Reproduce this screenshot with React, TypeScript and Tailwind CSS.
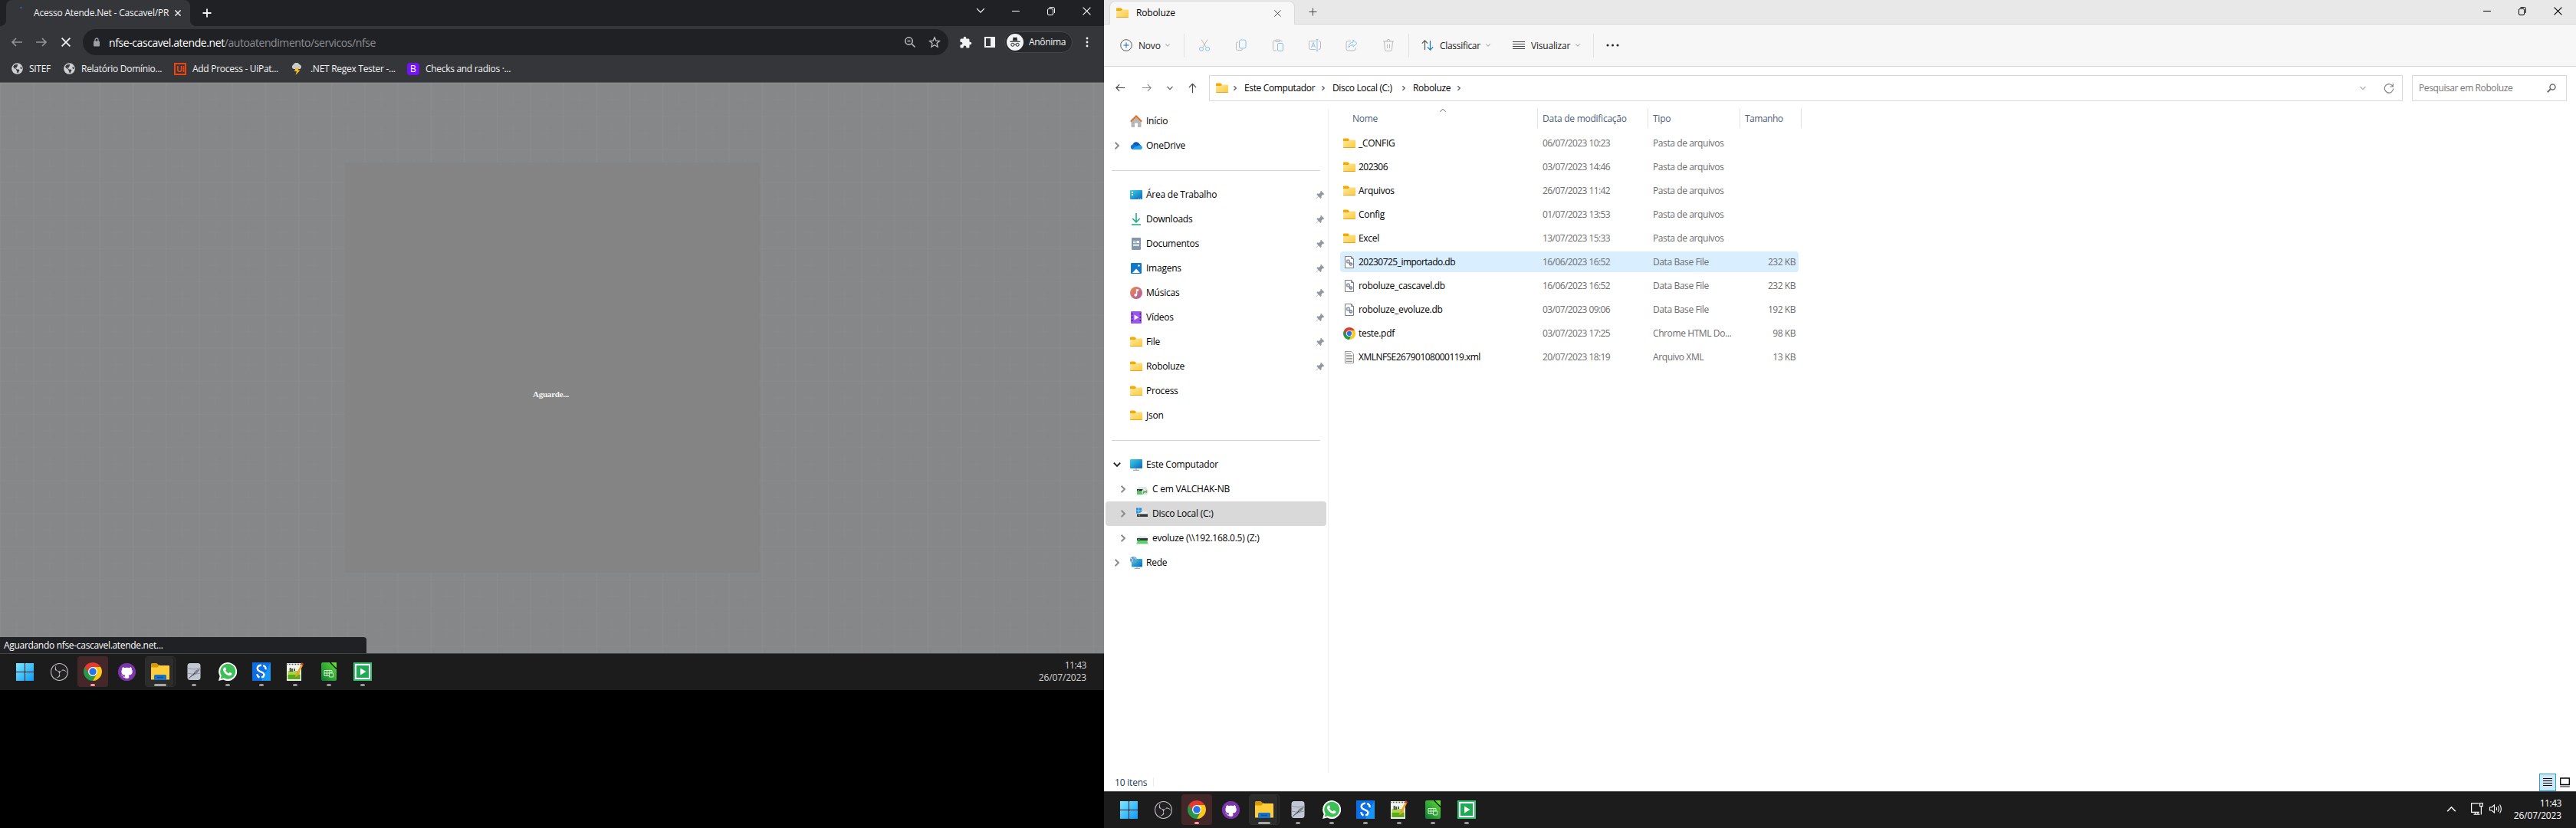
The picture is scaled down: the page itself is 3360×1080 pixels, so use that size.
import type { ReactNode } from "react";
import { FaGithub, FaGlobeAmericas } from "react-icons/fa";
import { MdExtension } from "react-icons/md";
import { SiObsstudio } from "react-icons/si";

type IconProps = { className?: string };

/* ---------- small line icons ---------- */

function Chevron({ className = "", dir = "down" }: IconProps & { dir?: "down" | "right" | "up" }) {
  const d = dir === "down" ? "M1.5 3l3.5 3.6L8.5 3" : dir === "up" ? "M1.5 6.8L5 3.2l3.5 3.6" : "M3 1.5L6.6 5 3 8.5";
  return (
    <svg viewBox="0 0 10 10" className={`shrink-0 fill-none stroke-current ${className}`}>
      <path d={d} />
    </svg>
  );
}

function Cross({ className = "" }: IconProps) {
  return (
    <svg viewBox="0 0 10 10" className={`shrink-0 fill-none stroke-current ${className}`}>
      <path d="M.5 .5l9 9M9.5 .5l-9 9" />
    </svg>
  );
}

function Plus({ className = "" }: IconProps) {
  return (
    <svg viewBox="0 0 12 12" className={`shrink-0 fill-none stroke-current ${className}`}>
      <path d="M6 .5v11M.5 6h11" />
    </svg>
  );
}

function Arrow({ className = "" }: IconProps) {
  return (
    <svg viewBox="0 0 14 12" className={`shrink-0 fill-none stroke-current ${className}`}>
      <path d="M6 1L1 6l5 5M1 6h13" />
    </svg>
  );
}

function Restore() {
  return (
    <svg viewBox="0 0 12 12" className="h-3 w-3 fill-none stroke-current">
      <rect x="1.500" y="3.500" width="7" height="8" rx="1.500" />
      <path d="M3.500 1.500h5A2 2 0 0110.500 3.500V9" />
    </svg>
  );
}

/* ---------- file system icons ---------- */

function Folder({ className = "h-4 w-4" }: IconProps) {
  return (
    <svg viewBox="0 0 16 16" className={`shrink-0 ${className}`}>
      <defs>
        <linearGradient id="folderFront" x1="0" y1="0" x2="1" y2="1">
          <stop offset="0" stopColor="#ffe8a0" />
          <stop offset="1" stopColor="#fcc93c" />
        </linearGradient>
      </defs>
      <path d="M0 2.600Q0 1.500 1 1.500h5l2 1.700v3H0z" fill="#f3a900" />
      <path d="M0 5h6.500L8 3.500H15q1 0 1 1V13q0 1-1 1H1q-1 0-1-1z" fill="url(#folderFront)" />
      <path d="M.3 13.500h15.400" stroke="#eaa41a" />
    </svg>
  );
}

function HomeIcon() {
  return (
    <svg viewBox="0 0 16 16" className="h-4 w-4">
      <path d="M1.500 8.500L8 2l6.500 6.500V15q0 1-1 1H10v-5.500H6V16H2.500q-1 0-1-1z" fill="#b5b7b9" />
      <path d="M.8 8.500L8 1.300l7.200 7.200" fill="none" stroke="#ea6a1c" strokeWidth="1.800" />
    </svg>
  );
}

function CloudIcon() {
  return (
    <svg viewBox="0 0 16 16" className="h-4 w-4">
      <path d="M3.500 7a4.800 4.800 0 019-1L15 9l-9 3z" fill="#0a5bb5" />
      <path d="M3.500 13a3.400 3.400 0 01-.3-6.600c2-.5 3.800.6 6 2.200L6 13z" fill="#0f74d6" />
      <path d="M3 12.800c1.500-3 5-3.500 8.500-5.300 2.500-.5 4.500 1 4.500 3a2.700 2.700 0 01-2.600 2.600H4z" fill="#28a1ee" />
    </svg>
  );
}

function DesktopIcon() {
  return (
    <svg viewBox="0 0 16 16" className="h-4 w-4">
      <defs>
        <linearGradient id="blueScreen" x1="0" y1="0" x2="1" y2="1">
          <stop offset="0" stopColor="#3ad3e6" />
          <stop offset="1" stopColor="#0b66bd" />
        </linearGradient>
      </defs>
      <rect y="2" width="16" height="12" rx="1" fill="url(#blueScreen)" />
      <path d="M2 4h2v2H2zM2 7h2v2H2z" fill="#fff" />
      <path d="M11 13h1.200M13.200 13h1.200" stroke="#fff" strokeWidth=".8" />
    </svg>
  );
}

function DownloadIcon() {
  return (
    <svg viewBox="0 0 16 16" className="h-4 w-4 fill-none stroke-[#22ae8a]" strokeWidth="1.600">
      <path d="M8 0v11.500M3.200 7L8 11.800 12.800 7" />
      <path d="M2 15h12" />
    </svg>
  );
}

function DocumentIcon() {
  return (
    <svg viewBox="0 0 16 16" className="h-4 w-4">
      <rect x="2" width="12" height="16" rx="1" fill="#8297ae" />
      <path d="M4 4.500h3.500M4 6.500h3.500M4 8.500h8M4 10.500h8" stroke="#fff" />
      <path d="M8.500 4H12v3H8.500z" fill="#fff" />
    </svg>
  );
}

function PictureIcon() {
  return (
    <svg viewBox="0 0 16 16" className="h-4 w-4">
      <rect x="1" y="1" width="14" height="14" rx="1" fill="#1278cd" />
      <path d="M3 14l5-5.500 5 5.500z" fill="#fff" />
      <circle cx="11.500" cy="4.500" r="1.200" fill="#fff" />
    </svg>
  );
}

function MusicIcon() {
  return (
    <svg viewBox="0 0 16 16" className="h-4 w-4">
      <defs>
        <linearGradient id="music" x1="0" y1="0" x2="1" y2="1">
          <stop offset="0" stopColor="#f08a4c" />
          <stop offset="1" stopColor="#a85aa8" />
        </linearGradient>
      </defs>
      <circle cx="8" cy="8" r="8" fill="url(#music)" />
      <path d="M8.200 10.800V3.500h2.600v2H9v5.500" fill="#fff" stroke="#fff" strokeWidth=".6" />
      <circle cx="7.200" cy="10.900" r="1.800" fill="#fff" />
    </svg>
  );
}

function VideoIcon() {
  return (
    <svg viewBox="0 0 16 16" className="h-4 w-4">
      <rect x="1" width="14" height="16" rx="1" fill="#9a55ea" />
      <path d="M2.700 2.500v12M13.300 2.500v12" stroke="#3b1a6b" strokeWidth="1.400" strokeDasharray="2 2.200" />
      <path d="M5.500 4.500l6 3.500-6 3.500z" fill="#f3eefc" />
    </svg>
  );
}

function MonitorIcon() {
  return (
    <svg viewBox="0 0 16 16" className="h-4 w-4">
      <rect y="1" width="16" height="12" rx="1" fill="url(#blueScreen)" />
      <path d="M8 13v2.300M4 15.300h8" stroke="#a4a8ab" strokeWidth="1.200" />
    </svg>
  );
}

function NetworkIcon() {
  return (
    <svg viewBox="0 0 16 16" className="h-4 w-4">
      <rect x="2" y="3" width="14" height="10.500" rx="1" fill="url(#blueScreen)" />
      <path d="M9 13.500v2M5.500 15.500h7.500" stroke="#a4a8ab" />
      <circle cx="4.500" cy="4.500" r="4.500" fill="#5fa2c9" />
      <path d="M1 2.500c2 0 3 1 2.500 3S1.500 7 1 7M5 .5c.5 2 2 2 3 3" fill="none" stroke="#cfe6f2" />
    </svg>
  );
}

function SharedDriveIcon() {
  return (
    <svg viewBox="0 0 16 16" className="h-4 w-4">
      <path d="M3 5h10l1.500 3h-13z" fill="#e1e3e4" />
      <path d="M1 8h10v3H1z" fill="#33373a" />
      <path d="M2 9.500h2" stroke="#4be06a" />
      <path d="M1 11.500h10V15H1z" fill="#45cf56" />
      <circle cx="11.500" cy="11.500" r="4.200" fill="#dfe3df" />
      <path d="M9 13.500l1.800-1.800-1.500-1M14 9.800l-1.800 1.800 1.500 1" fill="none" stroke="#2f9e3a" strokeWidth="1.200" />
    </svg>
  );
}

function LocalDriveIcon() {
  return (
    <svg viewBox="0 0 16 16" className="h-4 w-4">
      <path d="M0 .5h3.200v3.200H0zM3.900 .5h3.200v3.200H3.900zM0 4.400h3.200v3.200H0zM3.900 4.400h3.200v3.200H3.900z" fill="#1592e6" />
      <path d="M8 5.500h5.500L15 8.500H1z" fill="#f0f1f1" />
      <path d="M1 8.500h14v3.500H1z" fill="#35393b" />
      <path d="M3 10.200h2" stroke="#4be06a" />
    </svg>
  );
}

function NetDriveIcon() {
  return (
    <svg viewBox="0 0 16 16" className="h-4 w-4">
      <path d="M3 5.500h10L14.500 8h-13z" fill="#e1e3e4" />
      <path d="M1 8h14v3H1z" fill="#35393b" />
      <path d="M2.500 9.500h2" stroke="#4be06a" />
      <path d="M1.500 11h13l.5 4H1z" fill="#4fdc5e" />
      <path d="M0 15.200h16" stroke="#a9b0ab" strokeWidth=".8" />
    </svg>
  );
}

function PinIcon() {
  return (
    <svg viewBox="0 0 12 12" className="h-3 w-3 fill-[#8e989e]">
      <path d="M7 .8L11.200 5l-1 .9-.7-.2-2 2 .1 2.400-1.100.9-2.700-2.700L.9 11.300l-.4-.4 2.900-3L1.300 5.500l1-.9 2.300.1 2-1.900-.3-1z" />
    </svg>
  );
}

function DbFileIcon() {
  return (
    <svg viewBox="0 0 16 16" className="h-4 w-4">
      <path d="M2.500 .5h8l3 3v12h-11z" fill="#fff" stroke="#7b7b7b" />
      <path d="M10.500 .5v3h3" fill="none" stroke="#7b7b7b" />
      <circle cx="6.500" cy="7" r="1.900" fill="none" stroke="#8f9ba8" strokeWidth="1.600" />
      <circle cx="10" cy="10.500" r="1.600" fill="none" stroke="#6f7c8a" strokeWidth="1.500" />
    </svg>
  );
}

function XmlFileIcon() {
  return (
    <svg viewBox="0 0 16 16" className="h-4 w-4">
      <path d="M2.500 .5h8l3 3v12h-11z" fill="#fff" stroke="#969696" />
      <path d="M4 3.500h6M4 5.500h8M4 7.500h8M4 9.500h8M4 11.500h8M4 13.500h8" stroke="#969696" />
    </svg>
  );
}

function ChromeIcon({ className = "h-4 w-4" }: IconProps) {
  return (
    <svg viewBox="0 0 24 24" className={`shrink-0 ${className}`}>
      <path d="M12 12L1.610 6A12 12 0 0012 24l5.200-9z" fill="#279847" />
      <path d="M12 12h5.200v3L12 24A12 12 0 0022.390 6H12z" fill="#fdc912" />
      <path d="M1.610 6A12 12 0 0122.390 6H12L6.800 15z" fill="#e33b2e" />
      <path d="M1.610 6L6.800 15 12 18 9 22 2 16z" fill="#279847" />
      <circle cx="12" cy="12" r="6" fill="#fff" />
      <circle cx="12" cy="12" r="4.700" fill="#2a72e8" />
    </svg>
  );
}

/* ---------- taskbar ---------- */

function TaskSlot({ children, className = "", mark = "none" }: { children: ReactNode; className?: string; mark?: "none" | "dot" | "pink" }) {
  const marks = {
    none: "hidden",
    dot: "w-1.5 bg-[#9a9a9a]",
    pink: "w-1.5 bg-[#ff9aa2]",
  };
  return (
    <div className={`relative mr-1 flex h-10 w-10 items-center justify-center rounded ${className}`}>
      {children}
      <span className={`absolute bottom-[1px] left-1/2 h-[3px] -translate-x-1/2 rounded-full ${marks[mark]}`} />
    </div>
  );
}

function Taskbar({ tray = false }: { tray?: boolean }) {
  return (
    <div className="flex h-12 shrink-0 items-start border-t border-[#444444] bg-[#1c1c1c] pt-[3px] pl-[13px]">
      <TaskSlot className="pt-px pr-px">
        <svg viewBox="0 0 23 23" className="h-[23px] w-[23px]">
          <defs>
            <linearGradient id="win" x1="0" y1="0" x2="1" y2="1">
              <stop offset="0" stopColor="#7ceaff" />
              <stop offset="1" stopColor="#0f98f6" />
            </linearGradient>
          </defs>
          <path d="M0 0h11v11H0zM12 0h11v11H12zM0 12h11v11H0zM12 12h11v11H12z" fill="url(#win)" />
        </svg>
      </TaskSlot>
      <TaskSlot>
        <span className="flex h-[23px] w-[23px] items-center justify-center rounded-full bg-[#232124]">
          <SiObsstudio className="h-[23px] w-[23px] text-[#c8c8c8]" />
        </span>
      </TaskSlot>
      <TaskSlot className="bg-[#442829]" mark="pink">
        <ChromeIcon className="h-6 w-6" />
      </TaskSlot>
      <TaskSlot>
        <span className="flex h-[23px] w-[23px] items-center justify-center rounded-full bg-[radial-gradient(circle,#ffffff_8px,#7b35ad_8.5px)]">
          <FaGithub className="h-[23px] w-[23px] text-[#7b35ad]" />
        </span>
      </TaskSlot>
      <div className="relative mr-1 flex h-10 w-10 rounded border border-[#303030] bg-[#232323]">
        <div className="relative flex h-full w-[35px] items-center justify-center rounded border-r border-[#3a3a3a] bg-[#2c2c2c]">
          <svg viewBox="0 0 24 24" className="ml-1 h-6 w-6">
            <path d="M0 2.500Q0 1 1.500 1h6l2.500 2.500h2V8H0z" fill="#d59a05" />
            <path d="M0 6.500h8.500L10.500 4H23q1 0 1 1v17.500H0z" fill="#ffcc3a" />
            <path d="M4 23v-5.500q0-1.500 1.500-1.500h13q1.500 0 1.500 1.500V23z" fill="#1673c8" />
            <path d="M8 19.500h8" stroke="#0c4f97" strokeWidth="1.500" />
          </svg>
        </div>
        <span className="absolute bottom-0 left-[11px] h-[3px] w-4 rounded-full bg-[#a9a9a4]" />
      </div>
      <TaskSlot mark="dot">
        <svg viewBox="0 0 24 24" className="h-6 w-6">
          <rect x="3.500" y="1" width="17" height="22" rx="3.500" fill="#c3c7d3" />
          <path d="M3.500 7.500q8.500 3 17 0M3.500 14q8.500 3 17 0" fill="none" stroke="#9196a5" />
          <path d="M6 19.500c5-2 11-4.500 14-11-6 1-8.500 4.500-9 7.500z" fill="#7b808b" />
          <path d="M5 21l8-7" stroke="#3e424b" />
        </svg>
      </TaskSlot>
      <TaskSlot mark="dot">
        <svg viewBox="0 0 24 24" className="h-6 w-6">
          <path d="M0 24l1.700-6A12 12 0 116.200 22.500z" fill="#fff" />
          <path d="M2.600 21.400l1.200-4.200A10 10 0 116.900 20.300z" fill="#3cbf57" />
          <path d="M8 6.500c.6-.3 1-.2 1.300.5l.8 1.900c.1.500-.7 1.300-1 1.700 1 1.900 2.400 3 4.300 3.800.6-.6 1.100-1.400 1.600-1.300l2 1c.7.400.5 1.300.2 1.900-.8 1.300-2.600 1.600-4 1.200-3.700-1.300-6.500-4-7.200-7.200-.2-1.500.8-2.900 2-3.500z" fill="#fff" />
        </svg>
      </TaskSlot>
      <TaskSlot mark="dot">
        <svg viewBox="0 0 24 24" className="h-6 w-6">
          <path d="M0 0h24v24H0z" fill="#0a6ee8" />
          <path d="M24 0v24H12z" fill="#1795f5" />
          <path d="M12 3.800C6 3.800 5.200 9.500 9.500 11.500l4 1.800c3 1.500 2.300 5.500-1.500 6" fill="none" stroke="#fff" strokeWidth="2.400" />
          <path d="M14.200 4.200c2.600 .8 3.600 2.800 3.200 5M9.500 19.500c-2.300-.8-3-2.300-3-4.200" fill="none" stroke="#fff" strokeWidth="2.400" />
        </svg>
      </TaskSlot>
      <TaskSlot mark="dot">
        <svg viewBox="0 0 24 24" className="h-6 w-6">
          <path d="M1 1h19v23H1z" fill="#f1f3ee" />
          <path d="M2.500 11h16v11h-16z" fill="#a9d64a" />
          <path d="M2.500 16h16v6h-16z" fill="#5cab1d" />
          <path d="M2 2.500h18" stroke="#555" strokeDasharray="1 1" strokeWidth="1.500" />
          <path d="M5.500 7v5M8 8v4M11 8v3" stroke="#222" strokeWidth="1.500" />
          <path d="M20.500 1.500l2 1.500L15 18l-3 1 .7-3.200z" fill="#e9a32b" />
          <path d="M20 1l2.500 2" stroke="#b5382c" strokeWidth="2.500" />
        </svg>
      </TaskSlot>
      <TaskSlot mark="dot">
        <svg viewBox="0 0 24 24" className="h-6 w-6">
          <defs>
            <linearGradient id="calc" x1="0" y1="1" x2="1" y2="0">
              <stop offset="0" stopColor="#0c7a35" />
              <stop offset="1" stopColor="#5fdc3a" />
            </linearGradient>
          </defs>
          <path d="M4 0h10l8 8v14q0 2-2 2H4q-2 0-2-2V2q0-2 2-2z" fill="url(#calc)" />
          <path d="M14 0h8v8z" fill="#59e02a" />
          <path d="M13.500 0l8.500 8.500" stroke="#16200f" strokeWidth="1.600" />
          <path d="M6 10.500h10v7H6zM6 14h10M9.500 10.500v7M13 10.500v7" fill="none" stroke="#d8f4cf" />
          <path d="M12.500 14h5v5h-5z" fill="#2f9e41" stroke="#d8f4cf" />
        </svg>
      </TaskSlot>
      <TaskSlot mark="dot">
        <svg viewBox="0 0 24 24" className="h-6 w-6">
          <path d="M0 0h24v24H0z" fill="#2ec56c" />
          <path d="M3 3h18v18H3z" fill="#1faa55" stroke="#fff" strokeWidth="2" />
          <path d="M9 7.500l7.500 4.500L9 16.500z" fill="#fff" />
        </svg>
      </TaskSlot>
      <div className="flex-1" />
      {tray && (
        <div className="mt-[10px] mr-[15px] flex items-center text-white">
          <Chevron dir="up" className="mr-[17px] h-[15px] w-[15px]" />
          <svg viewBox="0 0 18 18" className="mr-[6px] h-[18px] w-[18px] fill-none stroke-current" strokeWidth="1.200">
            <path d="M11.500 1.800H1.600v11.600h10.200M4.500 16.200h8M6.500 13.500v2.500M10 13.500v2.500" />
            <path d="M12.600 1.600h3.600v4h-3.600zM14.400 5.600v11" />
          </svg>
          <svg viewBox="0 0 18 18" className="h-[18px] w-[18px] fill-none stroke-current" strokeWidth="1.100">
            <path d="M1.500 7v4h2.500l3.500 3V4L4 7z" />
            <path d="M10 7q1.200 2 0 4M12.300 5.200q2.400 3.800 0 7.600M14.600 3.500q3.600 5.500 0 11" />
          </svg>
        </div>
      )}
      <div className={`mt-[4px] flex flex-col items-end text-[12px] leading-4 ${tray ? "mr-[19px] text-white" : "mr-[23px] text-[#d4d4d4]"}`}>
        <span className="tracking-[-0.45px]">11:43</span>
        <span className="tracking-[-0.15px]">26/07/2023</span>
      </div>
    </div>
  );
}

/* ---------- browser window ---------- */

function GlobeIcon() {
  return <FaGlobeAmericas className="mr-2 ml-px h-[15px] w-[15px] shrink-0 text-[#cdcfd2]" />;
}

function Bookmark({ icon, width, children }: { icon: ReactNode; width: string; children: ReactNode }) {
  return (
    <div className={`flex shrink-0 items-center whitespace-nowrap ${width}`}>
      {icon}
      <span className="tracking-[-0.28px]">{children}</span>
    </div>
  );
}

function BrowserWindow() {
  return (
    <section className="flex h-[900px] w-[1440px] shrink-0 flex-col overflow-hidden bg-[#35363a] text-[12px] text-[#f1f3f4]">
      <div className="flex h-[34px] shrink-0 bg-[#202124] pl-2">
        <div className="relative flex w-60 items-center rounded-t-lg bg-[#35363a] pl-9">
          <span className="absolute bottom-0 -left-2 h-2 w-2 bg-[radial-gradient(circle_at_0_0,#202124_8px,#35363a_8px)]" />
          <span className="absolute -right-2 bottom-0 h-2 w-2 bg-[radial-gradient(circle_at_100%_0,#202124_8px,#35363a_8px)]" />
          <span className="absolute top-[9px] left-[18px] h-0.5 w-[3px] bg-[#35548a]" />
          <span className="w-[188px] whitespace-nowrap tracking-[-0.2px]">Acesso Atende.Net - Cascavel/PR</span>
          <Cross className="-ml-[4px] h-2 w-2 stroke-[1.800]" />
        </div>
        <div className="flex w-11 items-center justify-center">
          <Plus className="h-3 w-3 stroke-[1.800]" />
        </div>
        <div className="flex-1" />
        <div className="grid h-7 grid-cols-[46px_46px_46px_46px] place-items-center text-white">
          <Chevron className="h-3.5 w-3.5 stroke-[0.8]" />
          <span className="h-px w-2.5 bg-white" />
          <Restore />
          <Cross className="h-[11px] w-[11px]" />
        </div>
      </div>

      <div className="flex h-[42px] shrink-0 items-center pl-[15px]">
        <Arrow className="h-3 w-3.5 stroke-[1.700] text-[#919396]" />
        <Arrow className="ml-[18px] h-3 w-3.5 rotate-180 stroke-[1.700] text-[#919396]" />
        <Cross className="ml-[19px] h-3 w-3 stroke-[1.500]" />
        <div className="ml-4 flex h-[34px] w-[1129px] items-center rounded-full bg-[#202124] pr-[11px] pl-[13px]">
          <svg viewBox="0 0 10 12" className="mr-4 h-3 w-2.5">
            <path d="M3 5V3a2 2 0 014 0v2" fill="none" stroke="#9aa0a6" strokeWidth="1.300" />
            <rect x="1" y="4.500" width="8" height="7" rx="1" fill="#9aa0a6" />
          </svg>
          <span className="-ml-[5px] flex-1 text-[14px] tracking-[-0.42px] text-white">
            nfse-cascavel.atende.net<span className="text-[#8c8f93]">/autoatendimento/servicos/nfse</span>
          </span>
          <svg viewBox="0 0 16 16" className="mr-4 h-4 w-4 fill-none stroke-[#bdc1c6]" strokeWidth="1.500">
            <circle cx="6.500" cy="6.500" r="4.700" />
            <path d="M10 10l4.500 4.500M4.500 6.500h4" />
          </svg>
          <svg viewBox="0 0 16 16" className="mr-[-1px] h-4 w-4 fill-none stroke-[#bdc1c6]" strokeWidth="1.300">
            <path d="M8 1.800l1.900 4.300 4.600.4-3.500 3.100 1.100 4.600L8 11.800l-4.100 2.400L5 9.600 1.500 6.500l4.600-.4z" />
          </svg>
        </div>
        <MdExtension className="ml-[14px] h-[17px] w-[17px] text-[#f1f3f4]" />
        <span className="ml-4 h-3.5 w-3.5 border-2 border-r-[6px] border-[#f1f3f4]" />
        <div className="ml-3 flex h-7 w-[89px] items-center rounded-full border border-[#46474b] bg-[#27282b] pl-0.5">
          <svg viewBox="0 0 22 22" className="h-[22px] w-[22px]">
            <circle cx="11" cy="11" r="11" fill="#f1f3f4" />
            <path d="M7.800 9l.9-4.500q2.300 .8 4.600 0L14.200 9z" fill="#27282b" />
            <path d="M4.500 10.300h13" stroke="#27282b" strokeWidth="1.200" />
            <circle cx="7.800" cy="14.300" r="2" fill="none" stroke="#27282b" />
            <circle cx="14.200" cy="14.300" r="2" fill="none" stroke="#27282b" />
            <path d="M9.800 14h2.400" stroke="#27282b" />
          </svg>
          <span className="ml-[7px] tracking-[-0.3px]">Anônima</span>
        </div>
        <svg viewBox="0 0 4 14" className="ml-[17px] h-3.5 w-1 fill-[#f1f3f4]">
          <circle cx="2" cy="2" r="1.400" />
          <circle cx="2" cy="7" r="1.400" />
          <circle cx="2" cy="12" r="1.400" />
        </svg>
      </div>

      <div className="flex h-8 shrink-0 items-center border-b border-[#5b5b5c] pb-1 pl-3.5">
        <Bookmark width="w-[68px]" icon={<GlobeIcon />}>SITEF</Bookmark>
        <Bookmark width="w-[145px]" icon={<GlobeIcon />}>Relatório Domínio...</Bookmark>
        <Bookmark
          width="w-[152px]"
          icon={<span className="mr-2 flex h-4 w-4 items-center justify-center border-2 border-[#f0440f] text-[11px] leading-none font-bold tracking-[-0.5px] text-[#f0440f]">Ui</span>}
        >
          Add Process - UiPat...
        </Bookmark>
        <Bookmark
          width="w-[152px]"
          icon={
            <svg viewBox="0 0 16 16" className="mr-2.5 h-4 w-4">
              <path d="M4 8a3 3 0 01-.5-5.500 4.500 4.500 0 018-.5A3.300 3.300 0 0112.500 8z" fill="#c8cbce" />
              <path d="M6.500 6.500h5L9.500 9.500h3l-6 6.500 1.500-5H5z" fill="#f6bf26" />
            </svg>
          }
        >
          .NET Regex Tester -...
        </Bookmark>
        <Bookmark
          width="w-[140px]"
          icon={<span className="mr-2 flex h-4 w-4 items-center justify-center rounded-sm bg-[#7413f5] text-[12px] leading-none text-white">B</span>}
        >
          <span className="tracking-[-0.3px]">Checks and radios ·...</span>
        </Bookmark>
      </div>

      <div className="relative flex flex-1 items-start bg-[#868789]">
        <svg className="absolute inset-0 h-full w-full">
          <defs>
            <pattern id="tiles" width="43.200" height="43.200" patternUnits="userSpaceOnUse">
              <path d="M.5 0v43.200M0 .5h43.200" stroke="#8f9091" strokeOpacity=".5" />
              <path d="M21.500 12v20M11.500 22h20" stroke="#8f9091" strokeOpacity=".25" />
            </pattern>
          </defs>
          <rect width="100%" height="100%" fill="url(#tiles)" />
        </svg>
        <div className="relative mt-[104px] ml-[450px] flex h-[535px] w-[541px] items-center justify-center bg-[#848484]">
          <span className="mt-[69px] -ml-1 font-[Liberation_Serif,serif] text-[11px] leading-none font-bold tracking-[-0.2px] text-[#f4f4f4]">Aguarde...</span>
        </div>
        <div className="absolute bottom-0 left-0 flex h-[21px] w-[478px] items-center rounded-tr bg-[#202124] pl-[5px] tracking-[-0.31px] text-white">
          Aguardando nfse-cascavel.atende.net...
        </div>
      </div>
      <Taskbar />
    </section>
  );
}

/* ---------- file explorer window ---------- */

function TreeItem({ icon, label, pin, expand, level = 1, selected }: { icon: ReactNode; label: string; pin?: boolean; expand?: "right" | "down"; level?: 1 | 2; selected?: boolean }) {
  return (
    <div className={`mr-[2px] ml-0.5 flex h-8 items-center rounded-sm ${selected ? "bg-[#d9d9d9]" : ""}`}>
      <span className={`flex h-full items-center ${level === 2 ? "w-10 pl-[17px]" : "w-8 pl-[9px]"}`}>
        {expand && <Chevron dir={expand} className={`h-3 w-3 stroke-[1.600] ${expand === "down" ? "text-[#222]" : "text-[#8a8a8a]"}`} />}
      </span>
      {icon}
      <span className="ml-[5px] flex-1 whitespace-nowrap tracking-[-0.24px]">{label}</span>
      {pin && (
        <span className="mr-0.5">
          <PinIcon />
        </span>
      )}
    </div>
  );
}

function TreeRule() {
  return (
    <div className="flex h-8 items-center pr-[10px] pl-2.5">
      <span className="h-px w-full bg-[#d4d4d4]" />
    </div>
  );
}

const files = [
  { name: "_CONFIG", date: "06/07/2023 10:23", type: "Pasta de arquivos", size: "", kind: "folder" },
  { name: "202306", date: "03/07/2023 14:46", type: "Pasta de arquivos", size: "", kind: "folder", digits: true },
  { name: "Arquivos", date: "26/07/2023 11:42", type: "Pasta de arquivos", size: "", kind: "folder" },
  { name: "Config", date: "01/07/2023 13:53", type: "Pasta de arquivos", size: "", kind: "folder" },
  { name: "Excel", date: "13/07/2023 15:33", type: "Pasta de arquivos", size: "", kind: "folder" },
  { name: "20230725_importado.db", date: "16/06/2023 16:52", type: "Data Base File", size: "232 KB", kind: "db", digits: true, selected: true },
  { name: "roboluze_cascavel.db", date: "16/06/2023 16:52", type: "Data Base File", size: "232 KB", kind: "db" },
  { name: "roboluze_evoluze.db", date: "03/07/2023 09:06", type: "Data Base File", size: "192 KB", kind: "db" },
  { name: "teste.pdf", date: "03/07/2023 17:25", type: "Chrome HTML Do...", size: "98 KB", kind: "chrome" },
  { name: "XMLNFSE26790108000119.xml", date: "20/07/2023 18:19", type: "Arquivo XML", size: "13 KB", kind: "xml", digits: true },
];

const fileIcons: Record<string, ReactNode> = {
  folder: <Folder />,
  db: <DbFileIcon />,
  chrome: <ChromeIcon />,
  xml: <XmlFileIcon />,
};

function ToolSlot({ children }: { children: ReactNode }) {
  return (
    <span className="flex w-12 items-center justify-center">
      <svg viewBox="0 0 16 16" className="h-4 w-4 fill-none stroke-[#b9b9b9]">
        {children}
      </svg>
    </span>
  );
}

function Crumb({ children, width }: { children: ReactNode; width: string }) {
  return (
    <span className={`flex items-center justify-between whitespace-nowrap tracking-[-0.35px] ${width}`}>
      {children}
      <Chevron dir="right" className="h-2 w-2 stroke-[1.800] text-[#666]" />
    </span>
  );
}

function ExplorerWindow() {
  return (
    <section className="flex h-[1080px] w-[1920px] shrink-0 flex-col bg-white text-[12px] text-black">
      <div className="flex h-8 shrink-0 border-b border-[#d6d6d6] bg-[#e8e8e8] pl-[7px]">
        <div className="relative mt-px -mb-px flex w-[242px] items-center rounded-t-lg border border-b-0 border-[#dadada] bg-[#f7f7f7] pl-2">
          <Folder />
          <span className="ml-2.5 w-[180px] tracking-[-0.15px]">Roboluze</span>
          <Cross className="h-[9px] w-[9px] text-[#333]" />
        </div>
        <div className="flex w-[47px] items-center justify-center text-[#333]">
          <Plus className="h-[11px] w-[11px]" />
        </div>
        <div className="flex-1" />
        <div className="mr-px grid h-7 grid-cols-[46px_46px_46px] place-items-center">
          <span className="h-px w-2.5 bg-black" />
          <Restore />
          <Cross className="h-[11px] w-[11px]" />
        </div>
      </div>

      <div className="flex h-[55px] shrink-0 items-center border-b border-[#d6d6d6] bg-[#f7f7f7] text-[#222]">
        <svg viewBox="0 0 16 16" className="ml-[21px] h-4 w-4 fill-none">
          <circle cx="8" cy="8" r="7.300" stroke="#5c5c5c" />
          <path d="M8 4.500v7M4.500 8h7" stroke="#0f6cbd" />
        </svg>
        <span className="ml-2 w-[34px] pt-0.5 tracking-[-0.2px]">Novo</span>
        <Chevron className="h-2 w-2 text-[#777]" />
        <span className="ml-[17px] h-[31px] w-px bg-[#e2e2e2]" />
        <div className="ml-[2px] flex">
          <ToolSlot>
            <path d="M4 .5l6 10M12 .5l-6 10" />
            <circle cx="4" cy="12.800" r="2.500" stroke="#8cc0ea" />
            <circle cx="12" cy="12.800" r="2.500" stroke="#8cc0ea" />
          </ToolSlot>
          <ToolSlot>
            <path d="M4 4H3Q1.500 4 1.500 5.500v7Q1.500 14.500 3.500 14.500H8Q9.500 14.500 9.500 13" />
            <rect x="5.500" y="1" width="8.500" height="11" rx="2" stroke="#8cc0ea" />
          </ToolSlot>
          <ToolSlot>
            <path d="M5 2H3Q1.500 2 1.500 3.500v10Q1.500 15 3 15h3M10 2h2Q13 2 13 3.500M5 1h5v2.500H5z" />
            <rect x="7.500" y="5.500" width="7" height="10" rx="1.500" stroke="#8cc0ea" />
          </ToolSlot>
          <ToolSlot>
            <path d="M9 2.500H2.500Q.5 2.500 .5 4.500v7Q.5 13.500 2.500 13.500H9M13 2.500q2.500 0 2.500 2v7q0 2-2.500 2" />
            <path d="M3.500 11l2.500-6.500L8.500 11M4.300 9h3.400M11 .5v15M9.500 .5h3M9.500 15.500h3" stroke="#8cc0ea" />
          </ToolSlot>
          <ToolSlot>
            <path d="M7 2.500H3.500Q1 2.500 1 5v7.500Q1 15 3.500 15h7Q13 15 13 12.500V11" />
            <path d="M10 1l5 4.500-5 4.500V7.500Q6 7.500 4 11q.2-6.500 6-7z" stroke="#8cc0ea" />
          </ToolSlot>
          <ToolSlot>
            <path d="M1 3h14M2.500 3l1 10.500Q3.700 15.500 5.500 15.500h5q1.800 0 2-2L13.500 3M6 3V2Q6 .5 8 .5T10 2v1M6.500 6.500v5.500M9.500 6.500v5.500" />
          </ToolSlot>
        </div>
        <span className="ml-[2px] h-[31px] w-px bg-[#e2e2e2]" />
        <svg viewBox="0 0 16 16" className="ml-[16px] h-4 w-4 fill-none" strokeWidth="1.200">
          <path d="M4.500 14V2M.8 5.600L4.500 1.900l3.600 3.700" stroke="#555" />
          <path d="M11.500 2v12M7.900 10.400l3.600 3.700 3.700-3.700" stroke="#0f7ad0" />
        </svg>
        <span className="ml-2 w-[59px] pt-0.5 tracking-[-0.3px]">Classificar</span>
        <Chevron className="h-2 w-2 text-[#777]" />
        <svg viewBox="0 0 16 12" className="ml-[28px] h-3 w-4 stroke-[#444]">
          <path d="M0 1.500h16M0 4.500h16M0 7.500h16M0 10.500h16" />
        </svg>
        <span className="ml-2 w-[57px] pt-0.5 tracking-[-0.2px]">Visualizar</span>
        <Chevron className="h-2 w-2 text-[#777]" />
        <span className="ml-[16px] h-[31px] w-px bg-[#e2e2e2]" />
        <svg viewBox="0 0 18 4" className="ml-[16px] h-1 w-[18px] fill-[#222]">
          <circle cx="2" cy="2" r="1.500" />
          <circle cx="8.500" cy="2" r="1.500" />
          <circle cx="15" cy="2" r="1.500" />
        </svg>
      </div>

      <div className="flex h-[55px] shrink-0 items-center">
        <Arrow className="ml-[15px] h-[11px] w-3 stroke-[1.300] text-[#444]" />
        <Arrow className="ml-[23px] h-[11px] w-3 rotate-180 stroke-[1.300] text-[#8c8c8c]" />
        <Chevron className="ml-[19px] h-2.5 w-2.5 stroke-[1.300] text-[#666]" />
        <Arrow className="ml-[18px] h-3 w-[13px] rotate-90 stroke-[1.300] text-[#444]" />
        <div className="ml-[15px] flex h-[34px] w-[1557px] items-center border border-[#d9d9d9] pl-2">
          <Folder />
          <Chevron dir="right" className="ml-[5px] h-2 w-2 stroke-[1.800] text-[#666]" />
          <span className="ml-2 flex flex-1 gap-2">
            <Crumb width="w-[107px]">Este Computador</Crumb>
            <Crumb width="w-[97px]">Disco Local (C:)</Crumb>
            <Crumb width="w-[64px]">Roboluze</Crumb>
          </span>
          <Chevron className="mr-[22px] h-2.5 w-2.5 text-[#777]" />
          <svg viewBox="0 0 14 14" className="mr-[10px] h-3.5 w-3.5 fill-none stroke-[#808080]" strokeWidth="1.200">
            <path d="M12.200 5A5.700 5.700 0 1012.700 7.500M12.300 1v4H8.300" />
          </svg>
        </div>
        <div className="ml-3 flex h-[34px] w-[202px] items-center border border-[#d9d9d9] pr-[13px] pl-2 text-[#767676]">
          <span className="flex-1 tracking-[-0.4px]">Pesquisar em Roboluze</span>
          <svg viewBox="0 0 12 12" className="h-3 w-3 fill-none stroke-[#707070]">
            <circle cx="7.500" cy="4.500" r="3.500" strokeWidth="1.500" />
            <path d="M5 7L.8 11.300" strokeWidth="2" />
          </svg>
        </div>
      </div>

      <div className="flex flex-1">
        <nav className="h-[866px] w-[293px] shrink-0 border-r border-[#f0f0f0]">
          <TreeItem icon={<HomeIcon />} label="Início" />
          <TreeItem icon={<CloudIcon />} label="OneDrive" expand="right" />
          <TreeRule />
          <TreeItem icon={<DesktopIcon />} label="Área de Trabalho" pin />
          <TreeItem icon={<DownloadIcon />} label="Downloads" pin />
          <TreeItem icon={<DocumentIcon />} label="Documentos" pin />
          <TreeItem icon={<PictureIcon />} label="Imagens" pin />
          <TreeItem icon={<MusicIcon />} label="Músicas" pin />
          <TreeItem icon={<VideoIcon />} label="Vídeos" pin />
          <TreeItem icon={<Folder />} label="File" pin />
          <TreeItem icon={<Folder />} label="Roboluze" pin />
          <TreeItem icon={<Folder />} label="Process" />
          <TreeItem icon={<Folder />} label="Json" />
          <TreeRule />
          <TreeItem icon={<MonitorIcon />} label="Este Computador" expand="down" />
          <TreeItem icon={<SharedDriveIcon />} label="C em VALCHAK-NB" expand="right" level={2} />
          <TreeItem icon={<LocalDriveIcon />} label="Disco Local (C:)" expand="right" level={2} selected />
          <TreeItem icon={<NetDriveIcon />} label={"evoluze (\\\\192.168.0.5) (Z:)"} expand="right" level={2} />
          <TreeItem icon={<NetworkIcon />} label="Rede" expand="right" />
        </nav>

        <main className="flex-1">
          <div className="relative mb-1 grid h-[25px] w-[617px] grid-cols-[273px_144px_120px_80px] text-[#4c607a]">
            <Chevron dir="up" className="absolute -top-[3px] left-[144px] h-2.5 w-2.5 text-[#666]" />
            <span className="flex items-center border-r border-[#e2e2e2] pl-[31px] tracking-[-0.25px]">Nome</span>
            <span className="flex items-center border-r border-[#e2e2e2] pl-[6px] tracking-[-0.25px]">Data de modificação</span>
            <span className="flex items-center border-r border-[#e2e2e2] pl-[6px] tracking-[-0.25px]">Tipo</span>
            <span className="flex items-center border-r border-[#e2e2e2] pl-[6px] tracking-[-0.5px]">Tamanho</span>
          </div>
          {files.map((f) => (
            <div key={f.name} className="flex h-[31px] items-center pl-[15px]">
              <div className={`grid h-[27px] w-[598px] grid-cols-[20px_240px_144px_120px_66px] items-center rounded-sm pl-1 whitespace-nowrap text-[#6d6d6d] ${f.selected ? "bg-[#d9eeff]" : ""}`}>
                {fileIcons[f.kind]}
                <span className={`text-black ${f.digits ? "tracking-[-0.53px]" : "tracking-[-0.3px]"}`}>{f.name}</span>
                <span className="tracking-[-0.58px]">{f.date}</span>
                <span className="tracking-[-0.4px]">{f.type}</span>
                <span className="text-right tracking-[-0.45px]">{f.size}</span>
              </div>
            </div>
          ))}
        </main>
      </div>

      <div className="flex h-6 shrink-0 items-center">
        <span className="ml-[14px] w-[50px] pt-0.5 tracking-[-0.2px] text-[#1e395b]">10 itens</span>
        <span className="h-3 w-px bg-[#ececec]" />
        <div className="flex-1" />
        <span className="mt-px flex h-[23px] w-[22px] items-center justify-center border border-[#26a0da] bg-[#cce8f6]">
          <svg viewBox="0 0 12 11" className="h-[11px] w-3 stroke-black">
            <path d="M0 .5h12M0 3.500h12M0 6.500h12M0 9.500h12" />
          </svg>
        </span>
        <svg viewBox="0 0 13 13" className="mr-2 ml-[5px] h-[13px] w-[13px] fill-none stroke-black">
          <path d="M.7 1h11.600v8.500H.7z" strokeWidth="1.300" />
          <path d="M.2 12h12.600" />
        </svg>
      </div>
      <Taskbar tray />
    </section>
  );
}

export default function App() {
  return (
    <div className="flex h-[1080px] w-[3360px] items-start overflow-hidden bg-black font-['Open_Sans','Noto_Sans',sans-serif]">
      <BrowserWindow />
      <ExplorerWindow />
    </div>
  );
}
